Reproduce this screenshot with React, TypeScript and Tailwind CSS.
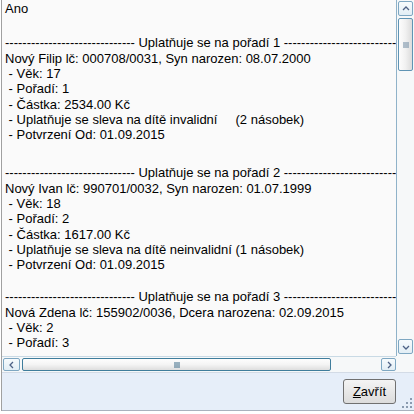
import React from "react";

const dashes = "-".repeat(30);

function Line({ children }: { children: React.ReactNode }) {
  return <div className="h-[15.33px] leading-[15.33px] whitespace-pre">{children}</div>;
}

function Block({ n, head, items }: { n: number; head: string; items: string[] }) {
  return (
    <div>
      <Line>{`${dashes} Uplatňuje se na pořadí ${n} ${dashes}`}</Line>
      <Line>{head}</Line>
      {items.map((t, i) => (
        <Line key={i}>{` - ${t}`}</Line>
      ))}
    </div>
  );
}

function Chevron({ dir }: { dir: "up" | "down" | "left" | "right" }) {
  const paths: Record<string, string> = {
    up: "M2 6 L5 3 L8 6",
    down: "M2 4 L5 7 L8 4",
    left: "M6 2 L3 5 L6 8",
    right: "M4 2 L7 5 L4 8",
  };
  return (
    <svg width="10" height="10" viewBox="0 0 10 10">
      <path d={paths[dir]} fill="none" stroke="#4d6185" strokeWidth="1.3" />
    </svg>
  );
}

function ArrowBtn({ dir, className = "" }: { dir: "up" | "down" | "left" | "right"; className?: string }) {
  return (
    <div
      className={`flex items-center justify-center rounded-[2px] border border-[#7ea7c2] bg-gradient-to-b from-[#f7fbfd] to-[#e2eef5] ${className}`}
    >
      <Chevron dir={dir} />
    </div>
  );
}

export default function App() {
  return (
    <div
      className="relative w-[414px] h-[414px] overflow-hidden bg-white text-[13px] text-black"
      style={{ fontFamily: '"Liberation Sans", Arial, sans-serif' }}
    >
      <div className="flex flex-col h-[411px] border-l border-[#a0a0a0] ml-[1px]">
        {/* top area */}
        <div className="flex h-[356px]">
          <div className="flex-1 overflow-hidden bg-[#fafafa] pl-[3px]">
            <div className="mt-[1.33px]">
              <Line>Ano</Line>
            </div>
            <div className="mt-[18.67px]">
              <Block
                n={1}
                head="Nový Filip lč: 000708/0031, Syn narozen: 08.07.2000"
                items={[
                  "Věk: 17",
                  "Pořadí: 1",
                  "Částka: 2534.00 Kč",
                  "Uplatňuje se sleva na dítě invalidní     (2 násobek)",
                  "Potvrzení Od: 01.09.2015",
                ]}
              />
            </div>
            <div className="mt-[22.67px]">
              <Block
                n={2}
                head="Nový Ivan lč: 990701/0032, Syn narozen: 01.07.1999"
                items={[
                  "Věk: 18",
                  "Pořadí: 2",
                  "Částka: 1617.00 Kč",
                  "Uplatňuje se sleva na dítě neinvalidní (1 násobek)",
                  "Potvrzení Od: 01.09.2015",
                ]}
              />
            </div>
            <div className="mt-[16.67px]">
              <Block
                n={3}
                head="Nová Zdena lč: 155902/0036, Dcera narozena: 02.09.2015"
                items={["Věk: 2", "Pořadí: 3"]}
              />
            </div>
          </div>
          {/* vertical scrollbar */}
          <div className="w-[18px] flex flex-col border-l border-[#8fb2c9] bg-[#f6f8f9] py-[1px] pr-[1px]">
            <ArrowBtn dir="up" className="h-[15px] ml-[1px]" />
            <div className="mt-[2px] h-[53px] ml-[1px] rounded-[2px] border border-[#5f94b4] bg-gradient-to-r from-[#fdfdfd] via-[#f1f1f1] to-[#dcdcdc] flex items-center justify-center">
              <svg width="6" height="6" viewBox="0 0 6 6">
                <path d="M0 1 H6 M0 3 H6 M0 5 H6" stroke="#6a87a0" strokeWidth="1" />
              </svg>
            </div>
            <div className="flex-1" />
            <ArrowBtn dir="down" className="h-[15px] ml-[1px] mb-[1px]" />
          </div>
        </div>
        {/* horizontal scrollbar */}
        <div className="flex h-[16px]">
          <div className="flex-1 flex items-stretch bg-[#f6f8f9] border-t border-[#c9dae5] pl-[1px] py-[1px]">
            <ArrowBtn dir="left" className="w-[17px]" />
            <div className="ml-[2px] w-[309px] rounded-[2px] border border-[#3f7d9c] bg-gradient-to-b from-[#fdfdfd] via-[#f4f4f4] to-[#dedede] flex items-center justify-center">
              <svg width="6" height="6" viewBox="0 0 6 6">
                <path d="M1 0 V6 M3 0 V6 M5 0 V6" stroke="#3b6a88" strokeWidth="1" />
              </svg>
            </div>
            <div className="flex-1" />
            <ArrowBtn dir="right" className="w-[15px]" />
          </div>
          <div className="w-[18px] bg-[#f6f8f9]" />
        </div>
        {/* bottom panel */}
        <div className="relative flex-1 bg-[#e6eef9] border-t border-[#d3dbe6] border-b border-b-[#a9b2bd] flex items-start justify-end pt-[6px] pr-[18px]">
          <button className="h-[25px] w-[53px] rounded-[3px] border border-[#707070] bg-gradient-to-b from-[#f4f4f4] to-[#dcdcdc] text-[13px] leading-none">
            <span className="underline">Z</span>avřít
          </button>
          <svg className="absolute right-[2px] bottom-[2px]" width="11" height="11" viewBox="0 0 11 11">
            {[
              [9, 1],
              [9, 5],
              [5, 5],
              [9, 9],
              [5, 9],
              [1, 9],
            ].map(([x, y], i) => (
              <rect key={i} x={x} y={y} width="2" height="2" fill="#8a9bb0" />
            ))}
          </svg>
        </div>
      </div>
    </div>
  );
}
